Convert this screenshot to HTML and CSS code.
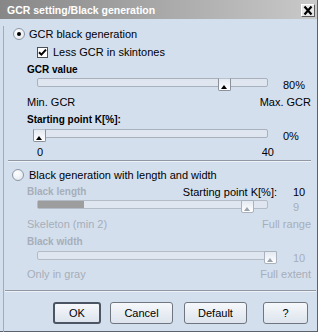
FILE: index.html
```html
<!DOCTYPE html>
<html lang="en">
<head>
  <meta charset="UTF-8">
  <title>GCR setting/Black generation</title>
  <link rel="stylesheet" href="styles.css">
</head>
<body>
<div class="dialog">
  <div class="titlebar">
    <span class="title">GCR setting/Black generation</span>
    <span class="close">
      <svg width="12" height="11" viewBox="0 0 12 11"><path d="M2.5 1.5 L9.5 9.5 M9.5 1.5 L2.5 9.5" stroke="#000" stroke-width="2.2" fill="none"/></svg>
    </span>
  </div>

  <div class="body">
    <div class="radio-row first"><span class="radio on"></span>GCR black generation</div>
    <div class="check-row">
      <span class="check">
        <svg width="9" height="9" viewBox="0 0 9 9"><path d="M1 4.2 L3.4 6.6 L8 1.6" stroke="#000" stroke-width="2" fill="none"/></svg>
      </span>Less GCR in skintones
    </div>
    <div class="label gap2">GCR value</div>
    <div class="slider">
      <div class="track"><span class="thumb" style="left:180px"></span></div>
      <span class="val">80%</span>
    </div>
    <div class="ends gap1"><span>Min. GCR</span><span>Max. GCR</span></div>
    <div class="label gap2">Starting point K[%]:</div>
    <div class="slider gap1">
      <div class="track"><span class="thumb" style="left:-5px"></span></div>
      <span class="val">0%</span>
    </div>
    <div class="ticks"><span>0</span><span>40</span></div>

    <div class="sep"></div>

    <div class="radio-row second"><span class="radio"></span>Black generation with length and width</div>
    <div class="pair-row gap1">
      <span class="label dis">Black length</span>
      <span class="kpoint">Starting point K[%]:</span>
      <span class="num">10</span>
    </div>
    <div class="slider">
      <div class="track dis"><span class="fill" style="width:46px"></span><span class="thumb dis" style="left:203px"></span></div>
      <span class="val wide dis">9</span>
    </div>
    <div class="ends dis gap1"><span>Skeleton (min 2)</span><span>Full range</span></div>
    <div class="label dis gap2">Black width</div>
    <div class="slider gap1">
      <div class="track dis"><span class="thumb dis" style="left:226px"></span></div>
      <span class="val wide dis">10</span>
    </div>
    <div class="ends dis"><span>Only in gray</span><span>Full extent</span></div>

    <div class="sep bottom"></div>

    <div class="buttons">
      <button class="btn ok">OK</button>
      <button class="btn cancel">Cancel</button>
      <button class="btn def">Default</button>
      <button class="btn help">?</button>
    </div>
  </div>
</div>
</body>
</html>
```

FILE: styles.css
```css
body {
  margin: 0;
  background: #ffffff;
  font-family: "Liberation Sans", Arial, sans-serif;
  font-size: 11px;
  color: #000000;
}

.dialog {
  width: 318px;
  height: 332px;
  box-sizing: border-box;
  border-right: 1px solid #5c626b;
  border-bottom: 1px solid #5c626b;
  background-color: #d4dfee;
}

.titlebar {
  height: 19px;
  display: flex;
  align-items: center;
  justify-content: space-between;
  background: linear-gradient(to right, #878787, #c9c9c9);
}

.title {
  padding-left: 7px;
  color: #ffffff;
  font-weight: bold;
  font-size: 10.5px;
}

.close {
  width: 14px;
  height: 13px;
  box-sizing: border-box;
  margin-right: 2px;
  margin-top: 1px;
  display: flex;
  align-items: center;
  justify-content: center;
  background: #e8e8e8;
  border: 1px solid;
  border-color: #ffffff #5a5a5a #5a5a5a #ffffff;
}

.body {
  margin-left: 3px;
  height: 312px;
  border-left: 1px solid #a2abb7;
}

.radio-row {
  height: 16px;
  display: flex;
  align-items: center;
}

.radio-row.first {
  margin-top: 7px;
  padding-left: 9px;
}

.radio-row.second {
  margin-top: 5px;
  padding-left: 8px;
}

.radio {
  width: 12px;
  height: 12px;
  box-sizing: border-box;
  border-radius: 50%;
  border: 1px solid #8d97a4;
  background: radial-gradient(circle at 40% 35%, #ffffff, #dde4ec);
  margin-right: 4px;
  display: flex;
  align-items: center;
  justify-content: center;
}

.radio-row.second .radio {
  margin-right: 5px;
}

.radio.on::after {
  content: "";
  width: 4px;
  height: 4px;
  border-radius: 50%;
  background: #000000;
}

.check-row {
  margin-top: 2px;
  height: 16px;
  padding-left: 33px;
  display: flex;
  align-items: center;
}

.check {
  width: 11px;
  height: 11px;
  box-sizing: border-box;
  border: 1px solid #4a4f57;
  background: #ffffff;
  margin-right: 5px;
  display: flex;
  align-items: center;
  justify-content: center;
}

.label {
  height: 16px;
  line-height: 16px;
  padding-left: 23px;
  font-weight: bold;
  font-size: 10px;
}

.gap1 {
  margin-top: 1px;
}

.gap2 {
  margin-top: 2px;
}

.dis {
  color: #a6aeb9;
}

.slider {
  height: 15px;
  padding-left: 33px;
  display: flex;
  align-items: flex-start;
}

.track {
  position: relative;
  width: 231px;
  height: 9px;
  box-sizing: border-box;
  border: 1px solid #a7b0bc;
  border-radius: 2px;
  background: #dfe6ef;
}

.track.dis {
  border-color: #b3bbc6;
}

.fill {
  display: block;
  height: 7px;
  background: #9d9d9d;
}

.thumb {
  position: absolute;
  top: -1px;
  width: 13px;
  height: 13px;
  box-sizing: border-box;
  border: 1px solid #8a919b;
  border-top-color: #b8c0ca;
  border-radius: 0 0 2px 2px;
  background: linear-gradient(#e4eaf2, #ffffff);
}

.thumb::after {
  content: "";
  position: absolute;
  left: 2px;
  bottom: 1px;
  border-left: 3.5px solid transparent;
  border-right: 3.5px solid transparent;
  border-bottom: 4px solid #000000;
}

.thumb.dis {
  border-color: #aab2bd;
}

.thumb.dis::after {
  border-bottom-color: #9aa2ad;
}

.val {
  margin-left: 15px;
  line-height: 15px;
}

.val.wide {
  margin-left: 25px;
}

.ends {
  height: 16px;
  line-height: 16px;
  padding-left: 23px;
  padding-right: 6px;
  display: flex;
  justify-content: space-between;
}

.ticks {
  height: 16px;
  line-height: 16px;
  width: 237px;
  padding-left: 33px;
  display: flex;
  justify-content: space-between;
}

.sep {
  margin-left: 4px;
  width: 303px;
  height: 1px;
  background: #8f98a4;
  border-bottom: 1px solid #eef2f7;
}

.sep.bottom {
  margin-top: 8px;
  margin-left: 1px;
  width: 311px;
}

.pair-row {
  height: 16px;
  line-height: 16px;
  display: flex;
}

.kpoint {
  margin-left: auto;
}

.num {
  width: 24px;
  margin-left: 16px;
}

.buttons {
  margin-top: 10px;
  padding-left: 49px;
  display: flex;
}

.btn {
  height: 22px;
  box-sizing: border-box;
  padding: 0;
  font-family: "Liberation Sans", Arial, sans-serif;
  font-size: 11px;
  color: #000000;
  border: 1px solid #6f7680;
  border-radius: 3px;
  background: linear-gradient(#f6f8fb, #dde4ed);
}

.btn.ok {
  width: 48px;
  border: 2px solid #4b5563;
}

.btn.cancel {
  width: 63px;
  margin-left: 9px;
}

.btn.def {
  width: 63px;
  margin-left: 11px;
}

.btn.help {
  width: 45px;
  margin-left: 16px;
}
```
